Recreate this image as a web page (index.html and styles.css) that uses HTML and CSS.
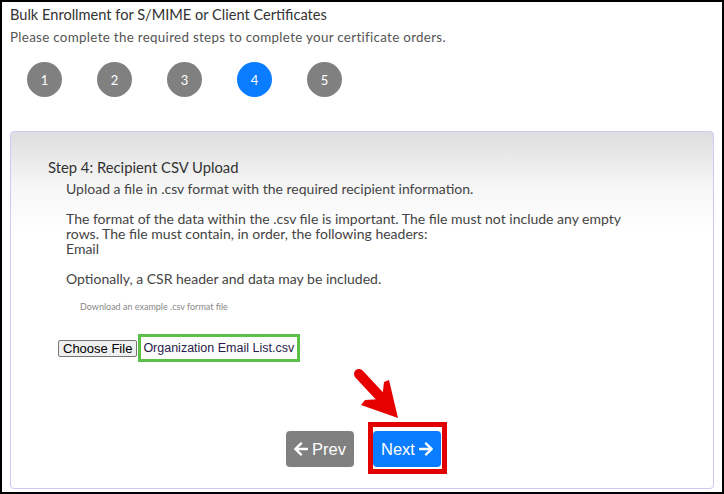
FILE: index.html
```html
<!DOCTYPE html>
<html lang="en">
<head>
  <meta charset="UTF-8">
  <meta name="viewport" content="width=device-width, initial-scale=1.0">
  <title>Bulk Enrollment</title>
  <link rel="stylesheet" href="styles.css">
</head>
<body>

<div class="frame">
  <h1>Bulk Enrollment for S/MIME or Client Certificates</h1>
  <p class="lead">Please complete the required steps to complete your certificate orders.</p>

  <div class="steps">
    <span class="step">1</span>
    <span class="step">2</span>
    <span class="step">3</span>
    <span class="step active">4</span>
    <span class="step">5</span>
  </div>

  <div class="panel">
    <h2>Step 4: Recipient CSV Upload</h2>
    <div class="info">
      <p>Upload a file in .csv format with the required recipient information.</p>
      <p>The format of the data within the .csv file is important. The file must not include any empty rows. The file must contain, in order, the following headers:</p>
      <p class="field">Email</p>
      <p>Optionally, a CSR header and data may be included.</p>
    </div>
    <a class="example" href="#">Download an example .csv format file</a>

    <div class="upload">
      <button class="choose">Choose File</button>
      <span class="filename">Organization Email List.csv</span>
    </div>

    <div class="nav">
      <button class="btn prev">
        <svg viewBox="0 0 448 512" class="ico flip"><path d="M190.5 66.9l22.2-22.2c9.4-9.4 24.6-9.4 33.9 0L441 239c9.4 9.4 9.4 24.6 0 33.9L246.6 467.3c-9.4 9.4-24.6 9.4-33.9 0l-22.2-22.2c-9.5-9.5-9.3-25 .4-34.3L311.4 296H24c-13.3 0-24-10.7-24-24v-32c0-13.3 10.7-24 24-24h287.4L190.9 101.2c-9.8-9.3-10-24.8-.4-34.3z"/></svg>
        Prev
      </button>
      <span class="highlight">
        <button class="btn next">
          Next
          <svg viewBox="0 0 448 512" class="ico"><path d="M190.5 66.9l22.2-22.2c9.4-9.4 24.6-9.4 33.9 0L441 239c9.4 9.4 9.4 24.6 0 33.9L246.6 467.3c-9.4 9.4-24.6 9.4-33.9 0l-22.2-22.2c-9.5-9.5-9.3-25 .4-34.3L311.4 296H24c-13.3 0-24-10.7-24-24v-32c0-13.3 10.7-24 24-24h287.4L190.9 101.2c-9.8-9.3-10-24.8-.4-34.3z"/></svg>
        </button>
      </span>
    </div>

    <!-- annotation arrow pointing at Next -->
    <svg class="pointer" viewBox="0 0 70 65" width="70" height="65">
      <line x1="15" y1="14" x2="42" y2="43" stroke="#e60000" stroke-width="10" stroke-linecap="round"/>
      <polygon points="54,58 17,45 21,40 38,39 40,22 45,20" fill="#e60000"/>
    </svg>
  </div>
</div>

</body>
</html>
```

FILE: styles.css
```css
html, body {
  margin: 0;
  background: #000;
}
.frame {
  position: relative;
  box-sizing: border-box;
  width: 720px;
  height: 490px;
  margin: 2px;
  background: #fff;
  padding: 4px 8px 0 8px;
  font-family: Lato, "Open Sans", sans-serif;
  color: #333;
}
h1 {
  font-size: 14.6px;
  font-weight: 400;
  margin: 0;
  line-height: 18px;
  color: #333;
}
.lead {
  font-size: 13.4px;
  margin: 5px 0 0 0;
  line-height: 17px;
  color: #555;
  letter-spacing: 0.3px;
}
.steps {
  display: flex;
  gap: 35px;
  padding-left: 17px;
  margin-top: 16px;
}
.step {
  width: 35px;
  height: 35px;
  border-radius: 50%;
  background: #808080;
  color: #fff;
  font-size: 13px;
  display: flex;
  align-items: center;
  justify-content: center;
}
.step.active {
  background: #0a7cff;
}
.panel {
  position: relative;
  box-sizing: border-box;
  margin-top: 34px;
  height: 358px;
  border: 1px solid #cbcbf4;
  border-radius: 4px;
  background: linear-gradient(#dedede 0, #f6f6f6 55px, #fff 100px);
  padding: 26px 0 0 37px;
}
h2 {
  font-size: 14.8px;
  font-weight: 400;
  margin: 0;
  line-height: 18px;
  color: #333;
}
.info {
  padding-left: 18px;
  margin-top: 5px;
  font-size: 14px;
  font-weight: 400;
  line-height: 15px;
  color: #444;
  width: 580px;
}
.info p {
  margin: 0 0 15px 0;
}
.info p.field {
  margin-top: -15px;
}
.example {
  display: block;
  margin-left: 32px;
  margin-top: 13px;
  font-size: 9px;
  color: #888;
  text-decoration: none;
}
.upload {
  display: flex;
  align-items: center;
  margin-top: 22px;
  margin-left: 10px;
}
.choose {
  font-family: "Liberation Sans", Arial, sans-serif;
  font-size: 13px;
  padding: 0 4px;
  height: 17px;
  line-height: 15px;
  border: 1px solid #767676;
  border-radius: 2px;
  background: #efefef;
  color: #000;
}
.filename {
  margin-left: 1px;
  border: 3px solid #5cbf47;
  padding: 3px 3px 3px 2px;
  font-family: "Liberation Sans", Arial, sans-serif;
  font-size: 12.5px;
  line-height: 16px;
  color: #2a1a4a;
}
.nav {
  display: flex;
  justify-content: center;
  align-items: flex-start;
  gap: 14px;
  margin-top: 60px;
  padding-right: 28px;
}
.btn {
  display: flex;
  align-items: center;
  justify-content: center;
  gap: 4px;
  height: 36px;
  padding: 0;
  border: none;
  border-radius: 4px;
  color: #fff;
  font-family: "Liberation Sans", Arial, sans-serif;
  font-size: 16.5px;
}
.prev {
  background: #808080;
  width: 68px;
  margin-top: 9px;
}
.next {
  background: #0a7cff;
  width: 68px;
}
.highlight {
  display: block;
  border: 5px solid #e30000;
  padding: 4px 1px 2px 0;
}
.ico {
  width: 14px;
  height: 16px;
  fill: #fff;
}
.flip {
  transform: scaleX(-1);
}
.pointer {
  position: absolute;
  left: 333px;
  top: 228px;
}
```
